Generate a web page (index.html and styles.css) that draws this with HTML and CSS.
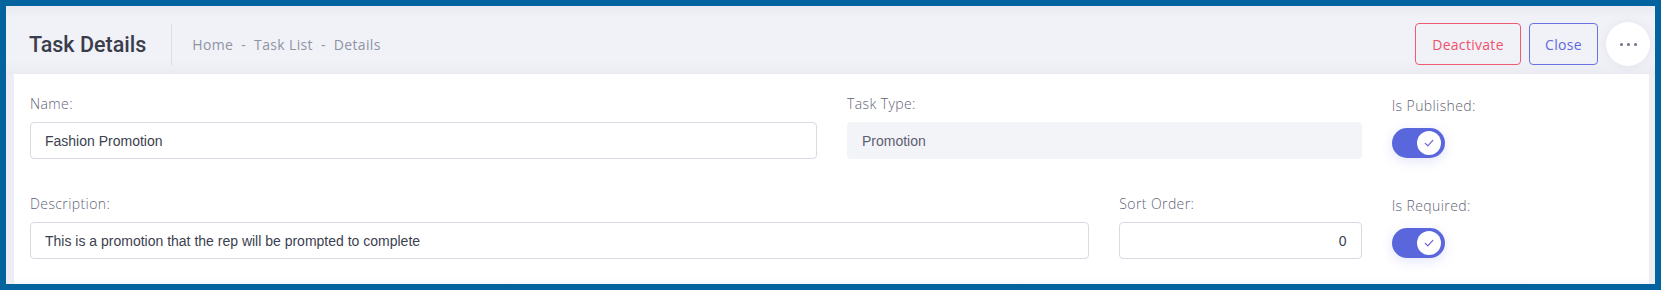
FILE: index.html
```html
<!DOCTYPE html>
<html lang="en">
<head>
<meta charset="utf-8">
<title>Task Details</title>
<link rel="stylesheet" href="styles.css">
</head>
<body>
<div class="frame">
  <header class="toolbar">
    <div class="title-group">
      <h1 class="page-title">Task Details</h1>
      <span class="divider"></span>
      <nav class="crumbs">
        <span class="crumb">Home</span>
        <span class="dash">-</span>
        <span class="crumb">Task List</span>
        <span class="dash">-</span>
        <span class="crumb">Details</span>
      </nav>
    </div>
    <div class="actions">
      <button class="btn btn-danger" type="button">Deactivate</button>
      <button class="btn btn-primary" type="button">Close</button>
      <button class="btn-more" type="button" aria-label="More">
        <span class="dot"></span><span class="dot"></span><span class="dot"></span>
      </button>
    </div>
  </header>
  <main class="card">
    <div class="form-grid">
      <div class="field span-6">
        <label class="label">Name:</label>
        <div class="input">Fashion Promotion</div>
      </div>
      <div class="field span-4">
        <label class="label">Task Type:</label>
        <div class="input input-readonly">Promotion</div>
      </div>
      <div class="field span-2 field-switch">
        <label class="label">Is Published:</label>
        <span class="switch">
          <span class="knob">
            <svg viewBox="0 0 12 12" width="12" height="12"><path d="M2.2 6.4 L4.8 8.8 L9.8 3.4" fill="none" stroke="#6c63d9" stroke-width="1.2" stroke-linecap="round" stroke-linejoin="round"/></svg>
          </span>
        </span>
      </div>
      <div class="field span-8">
        <label class="label">Description:</label>
        <div class="input">This is a promotion that the rep will be prompted to complete</div>
      </div>
      <div class="field span-2">
        <label class="label">Sort Order:</label>
        <div class="input input-number">0</div>
      </div>
      <div class="field span-2 field-switch">
        <label class="label">Is Required:</label>
        <span class="switch">
          <span class="knob">
            <svg viewBox="0 0 12 12" width="12" height="12"><path d="M2.2 6.4 L4.8 8.8 L9.8 3.4" fill="none" stroke="#6c63d9" stroke-width="1.2" stroke-linecap="round" stroke-linejoin="round"/></svg>
          </span>
        </span>
      </div>
    </div>
  </main>
</div>
</body>
</html>
```

FILE: styles.css
```css
* { box-sizing: border-box; }
html, body { margin: 0; padding: 0; }
body {
  width: 1661px;
  height: 290px;
  overflow: hidden;
  font-family: "Open Sans", "Liberation Sans", sans-serif;
}
.frame {
  width: 1661px;
  height: 290px;
  border: 6px solid #02639f;
  background: #eceef4;
  display: flex;
  flex-direction: column;
  padding: 0 6px 0 8px;
  overflow: hidden;
}
.toolbar {
  height: 68px;
  flex: none;
  margin: 0 -6px 0 -8px;
  padding: 16px 5px 8px 23px;
  display: flex;
  align-items: center;
  justify-content: space-between;
  background: linear-gradient(#e9eaf2 0px, #f1f2f7 12px, #f1f2f7 54px, #ebecf2 68px);
}
.title-group {
  display: flex;
  align-items: center;
  height: 100%;
}
.page-title {
  margin: 0;
  font-family: Roboto, "Liberation Sans", sans-serif;
  font-weight: 500;
  font-size: 21.5px;
  color: #3a3d4c;
  letter-spacing: 0;
}
.divider {
  width: 1px;
  height: 41px;
  background: #dcdee7;
  margin: 0 20px 0 25px;
}
.crumbs {
  display: flex;
  align-items: center;
  gap: 8px;
  font-size: 14px;
  letter-spacing: 0.35px;
  color: #8f93a4;
}
.actions {
  display: flex;
  align-items: center;
  gap: 8px;
}
.btn {
  height: 42px;
  border-radius: 4px;
  background: transparent;
  font-family: "Open Sans", "Liberation Sans", sans-serif;
  font-size: 14px;
  letter-spacing: 0.3px;
  padding: 0 10px;
  cursor: pointer;
}
.btn-danger {
  width: 106px;
  border: 1px solid #ef5a73;
  color: #f0506e;
}
.btn-primary {
  width: 69px;
  border: 1px solid #6a72e0;
  color: #5f69df;
}
.btn-more {
  width: 44px;
  height: 44px;
  border-radius: 50%;
  border: none;
  background: #fff;
  display: flex;
  align-items: center;
  justify-content: center;
  gap: 4px;
  padding: 0;
  box-shadow: 0 0 10px rgba(120, 125, 180, 0.12);
}
.dot {
  width: 3px;
  height: 3px;
  border-radius: 50%;
  background: #6d7285;
}
.card {
  flex: 1;
  background: linear-gradient(#fff 0, #fff 204px, #f5f5f8 212px);
  padding: 20px 15px 0 16px;
}
.form-grid {
  display: grid;
  grid-template-columns: repeat(12, 1fr);
  column-gap: 30px;
  row-gap: 35px;
}
.span-6 { grid-column: span 6; }
.span-4 { grid-column: span 4; }
.span-8 { grid-column: span 8; }
.span-2 { grid-column: span 2; }
.field {
  display: flex;
  flex-direction: column;
  gap: 8px;
}
.label {
  font-size: 14px;
  font-weight: 300;
  line-height: 20px;
  letter-spacing: 0.4px;
  color: #5f6375;
}
.input {
  height: 37px;
  border: 1px solid #d9dbe3;
  border-radius: 4px;
  background: #fff;
  padding: 0 14px;
  display: flex;
  align-items: center;
  font-family: "Liberation Sans", Arial, sans-serif;
  font-size: 14px;
  color: #3c3f4f;
}
.input-readonly {
  background: #f3f4f8;
  border-color: #f3f4f8;
  color: #5d6070;
}
.input-number {
  justify-content: flex-end;
}
.field-switch {
  padding-top: 2px;
  gap: 12px;
}
.switch {
  width: 53px;
  height: 30px;
  border-radius: 15px;
  background: #5a67dc;
  display: flex;
  align-items: center;
  justify-content: flex-end;
  padding-right: 4px;
  box-shadow: 0 3px 12px rgba(90, 103, 220, 0.18);
}
.knob {
  width: 24px;
  height: 24px;
  border-radius: 50%;
  background: #fff;
  display: flex;
  align-items: center;
  justify-content: center;
}
```
